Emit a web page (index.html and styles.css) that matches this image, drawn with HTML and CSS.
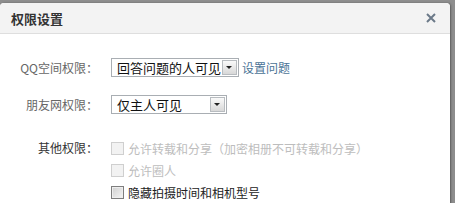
FILE: index.html
```html
<!DOCTYPE html>
<html lang="zh-CN">
<head>
    <meta charset="UTF-8">
    <title>权限设置</title>
    <link rel="stylesheet" href="styles.css">
</head>
<body>
    <div class="dialog">
        <div class="dialog-header">
            <h3 class="dialog-title">权限设置</h3>
            <svg class="dialog-close" width="10" height="10" viewBox="0 0 10 10">
                <path d="M1 1 L9 9 M9 1 L1 9" stroke="#6b7988" stroke-width="2" fill="none"/>
            </svg>
        </div>

        <div class="dialog-body">
            <div class="form-row">
                <label class="form-label">QQ空间权限：</label>
                <div class="select select-qzone">
                    <span class="select-text">回答问题的人可见</span>
                    <span class="select-arrow"></span>
                </div>
                <a class="link" href="#">设置问题</a>
            </div>

            <div class="form-row">
                <label class="form-label">朋友网权限：</label>
                <div class="select select-pengyou">
                    <span class="select-text">仅主人可见</span>
                    <span class="select-arrow"></span>
                </div>
            </div>

            <div class="form-row form-row-top">
                <label class="form-label label-dark">其他权限：</label>
                <div class="check-list">
                    <div class="check disabled"><span class="box"></span>允许转载和分享（加密相册不可转载和分享）</div>
                    <div class="check disabled"><span class="box"></span>允许圈人</div>
                    <div class="check"><span class="box"></span>隐藏拍摄时间和相机型号</div>
                </div>
            </div>
        </div>
    </div>
</body>
</html>
```

FILE: styles.css
```css
body {
    margin: 0;
    background: #8e8e8e;
    font-family: "Noto Sans CJK SC", "Liberation Sans", sans-serif;
    overflow: hidden;
}

.dialog {
    margin-top: 3px;
    width: 450px;
    height: 210px;
    background: #fff;
    border-radius: 4px 4px 0 0;
    box-shadow: 1px 0 2px rgba(0, 0, 0, 0.35);
}

.dialog-header {
    height: 30px;
    border-bottom: 1px solid #dedede;
    background: #f3f3f3;
    border-radius: 4px 4px 0 0;
    display: flex;
    align-items: center;
    justify-content: space-between;
    padding: 0 11px;
}

.dialog-title {
    margin: 0;
    font-size: 13px;
    font-weight: bold;
    color: #333;
    line-height: 1;
}

.dialog-close {
    display: block;
    margin-right: 3px;
}

.dialog-body {
    padding-top: 24px;
    font-size: 12px;
}

.form-row {
    display: flex;
    align-items: center;
    height: 19px;
    margin-bottom: 18px;
}

.form-row-top {
    align-items: flex-start;
    height: auto;
    margin-top: 23px;
}

.form-label {
    width: 98px;
    margin-right: 13px;
    text-align: right;
    color: #666;
    line-height: 19px;
}

.label-dark {
    color: #333;
    line-height: 22px;
}

.select {
    display: flex;
    align-items: center;
    height: 17px;
    border: 1px solid #a9aeb3;
    background: #fff;
}

.select-qzone {
    width: 126px;
}

.select-pengyou {
    width: 114px;
}

.select-text {
    flex: 1;
    padding-left: 5px;
    font-size: 13px;
    line-height: 17px;
    color: #111;
    white-space: nowrap;
}

.select-arrow {
    position: relative;
    width: 13px;
    height: 13px;
    margin-right: 1px;
    border: 1px solid #b8bcc0;
    background: linear-gradient(#fafafa, #d8d8d8);
}

.select-arrow::after {
    content: "";
    position: absolute;
    left: 3px;
    top: 5px;
    border-left: 3px solid transparent;
    border-right: 3px solid transparent;
    border-top: 3px solid #222;
}

.link {
    margin-left: 3px;
    color: #4a7396;
    text-decoration: none;
    line-height: 19px;
}

.check-list {
    display: flex;
    flex-direction: column;
}

.check {
    display: flex;
    align-items: center;
    height: 22px;
    color: #222;
}

.check .box {
    width: 11px;
    height: 11px;
    margin-right: 4px;
    border: 1px solid #7e7e7e;
    background: linear-gradient(135deg, #cfcfcf, #f5f5f5);
    box-shadow: inset 0 0 0 1px #eee;
}

.check.disabled {
    color: #bdbdbd;
}

.check.disabled .box {
    border-color: #cfcfcf;
    background: #f2f2f2;
    box-shadow: none;
}
```
